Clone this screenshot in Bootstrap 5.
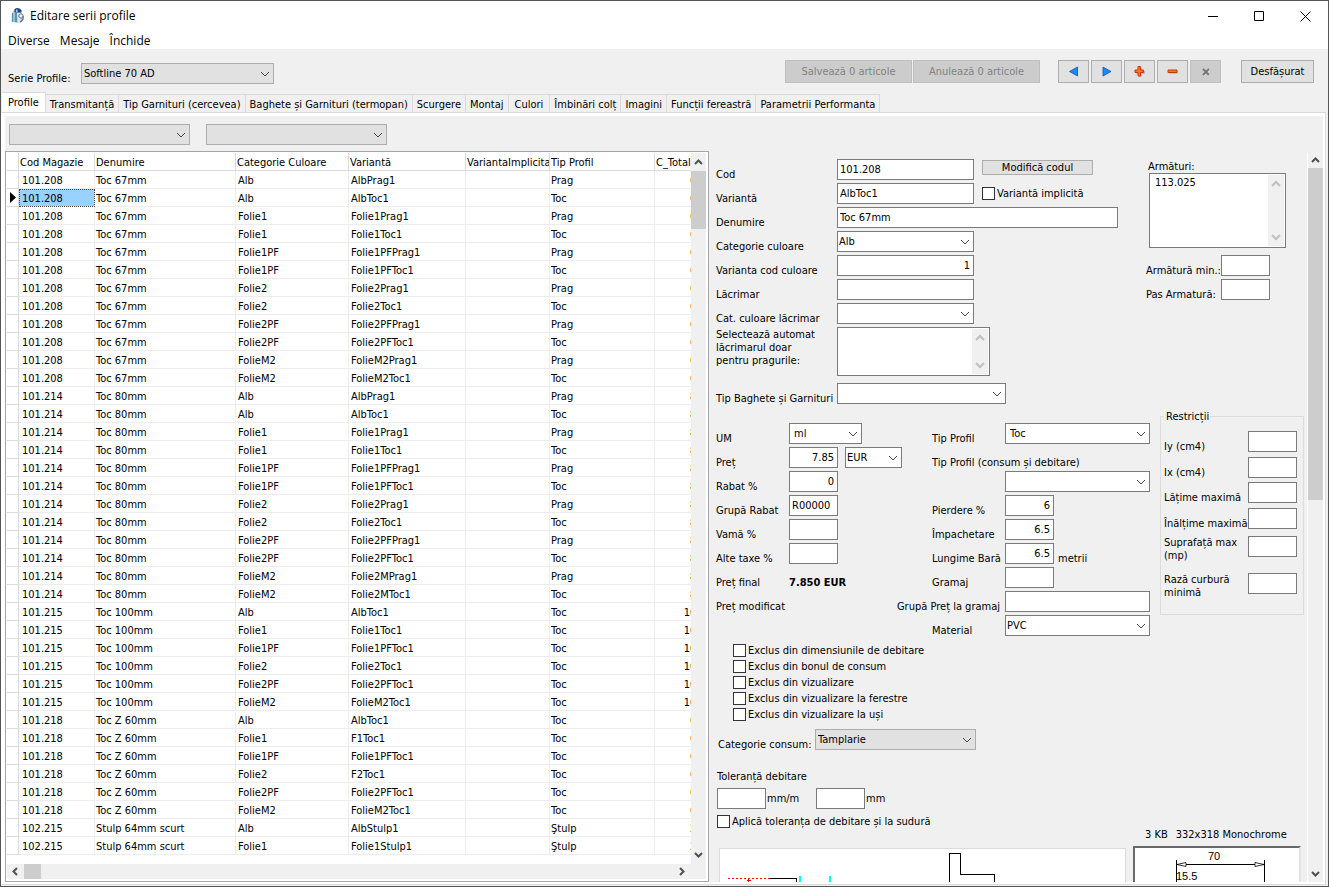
<!DOCTYPE html>
<html lang="ro">
<head>
<meta charset="utf-8">
<meta name="viewport" content="width=device-width, initial-scale=1">
<title>Editare serii profile</title>
<link href="https://cdn.jsdelivr.net/npm/bootstrap@5.3.0/dist/css/bootstrap.min.css" rel="stylesheet">
<style>
  :root { --face:#f0f0f0; --btn:#e1e1e1; --edge:#adadad; --field:#7a7a7a; --rule:#dadada; }
  body { font:11px/13px "DejaVu Sans Condensed","Noto Sans",sans-serif; color:#000; background:var(--face); }
  .app-window { border:1px solid #555; background:var(--face); }
  .title-bar, .menu-bar { font:12px/16px "Open Sans","Noto Sans",sans-serif; background:#fff; }
  .title-bar { height:29px; padding-left:9px; }
  .title-bar h1 { font-size:12px; line-height:16px; font-weight:400; margin:0 0 0 5px; }
  .title-bar button { width:46px; height:29px; border:0; background:none; padding:0; }
  .menu-bar { height:19px; padding:3px 0 0 7px; gap:10px; }
  .menu-bar a { color:#000; text-decoration:none; }
  .tool-bar { height:43px; padding:11px 14px 0 7px; }
  .tool-bar > label { width:73px; padding-top:12px; }
  .tool-bar .w-series { margin-top:3px; }
  .nav-keys { gap:2px; margin:0 20px 0 18px; }

  .form-control, .form-select { height:21px; min-height:0; padding:0 3px 1px 2px; border:1px solid var(--field); border-radius:0; background-color:#fff; color:#000; font-size:11px; line-height:18px; }
  .form-select { --bs-form-select-bg-img:none; background-image:url("data:image/svg+xml,%3Csvg xmlns='http://www.w3.org/2000/svg' width='10' height='6'%3E%3Cpath d='M1 1l4 4 4-4' fill='none' stroke='%23444'/%3E%3C/svg%3E"); background-size:10px 6px; background-position:right 3px top 7px; padding:0 14px 0 1px; line-height:19px; }
  .form-select.drop-list { background-color:var(--btn); border-color:var(--edge); padding-left:2px; }
  .form-select.pad-text { padding-left:4px; }
  .w-num { width:49px; } .w-mid { width:137px; } .w-um { width:73px; } .w-cur { width:57px; }
  .w-area { width:153px; } .w-filter { width:181px; } .w-series { width:193px; } .w-cat { width:161px; } .w-bag { width:169px; }

  .btn-flat { height:23px; padding:0; border:1px solid var(--edge); border-radius:0; background:var(--btn); color:#000; font-size:11px; line-height:21px; }
  .btn-flat svg { display:block; margin:0 auto; }
  .btn-flat:disabled { background:#ccc; border-color:#bfbfbf; color:#838383; opacity:1; }
  .btn-wide { width:127px; margin-left:1px; } .btn-ico { width:31px; } .btn-more { width:73px; }
  .btn-small { width:111px; height:15px; line-height:14px; margin:1px 0 0 8px; }

  .page-tabs { padding-left:1px; flex-wrap:nowrap; border:0; }
  .page-tabs .nav-link { height:18px; margin:2px 0 0; padding:1px 4px 0; line-height:17px; border:1px solid var(--rule); border-width:1px 1px 0 0; border-radius:0; background:var(--face); color:#000; white-space:nowrap; }
  .page-tabs .nav-link.roomy { padding-left:6px; padding-right:6px; }
  .page-tabs .nav-link.active { height:20px; margin:0; padding-left:6px; padding-right:6px; background:#fff; border-color:var(--rule); }
  .tab-page { margin:0 2px 1px 0; border:1px solid var(--rule); border-left-color:#fff; background:#fff; padding:3px 2px 2px 3px; min-height:0; }
  .tab-body { background:var(--face); padding-top:8px; min-height:0; }
  .filters { gap:16px; padding:0 0 6px 4px; }

  .grid-frame { border:1px solid #a5a5ad; background:#fff; padding:1px 2px 2px 1px; }
  .grid-frame, .grid-row { min-width:0; min-height:0; }
  .grid-clip { overflow:hidden; }
  .data-grid { table-layout:fixed; width:709px; margin:0; border-collapse:separate; border-spacing:0; color:#000; }
  .data-grid th, .data-grid td { height:18px; padding:2px 0 0 2px; border:0 solid #ededed; border-width:0 1px 1px 0; font-weight:400; line-height:15px; vertical-align:top; white-space:nowrap; overflow:hidden; }
  .data-grid th { border-color:var(--rule); padding-left:1px; }
  .data-grid .mark-col { border-color:var(--rule); padding:3px 0 0 3px; }
  .data-grid td:nth-child(2) { padding-left:3px; }
  .data-grid td:nth-child(3), .data-grid td:nth-child(7) { padding-left:1px; }
  .data-grid td:last-child { text-align:right; padding-right:3px; }
  .data-grid .picked { background:#99d1ff; outline:1px dotted #444; outline-offset:-1px; }
  .data-grid svg { display:block; }

  .scroll-v { width:15px; background:var(--face); }
  .scroll-h { height:15px; background:var(--face); }
  .scroll-v span, .scroll-h span { display:block; background:#cdcdcd; }
  .scroll-v svg, .scroll-h svg { display:block; flex:none; }

  .form-pane { width:614px; flex:none; margin-top:2px; min-height:0; }
  .form-scroll { overflow:hidden; padding:6px 0 0 7px; border-right:1px solid #fff; }
  .form-grid { display:grid; grid-auto-rows:24px; align-content:start; }
  .form-grid > label, .form-grid > span, .form-grid output, .low { align-self:end; line-height:16px; white-space:nowrap; }
  .form-grid > label { padding-bottom:1px; margin-bottom:-1px; }
  .g-main { grid-template-columns:121px 281px; grid-template-rows:repeat(7,24px) 56px 24px; }
  .form-grid > label.note { align-self:start; line-height:13px; padding-top:1px; }
  .g-price { grid-template-columns:73px 113px; padding-top:16px; margin-right:30px; }
  .g-type { grid-template-columns:73px 145px; padding-top:16px; margin-right:10px; }
  .form-grid > label.across { grid-column:span 2; }
  .form-grid > label.to-left { justify-self:end; padding-right:5px; }
  .arm-box { margin-left:30px; padding-top:1px; }
  .g-arm { grid-template-columns:75px 49px; margin:7px 0 0 -2px; }
  .list-area { height:49px; resize:none; overflow:hidden; padding-top:0; }
  .list-area.tall { height:75px; padding:0 20px 0 5px; }
  .area-bar { top:2px; right:2px; bottom:2px; width:16px; background:var(--face); }
  .tick { appearance:none; width:13px; height:13px; margin:0; border:1px solid #333; background:#fff; flex:none; }
  .tick:checked { background:#333; }
  .tick-line { display:flex; align-items:center; gap:2px; }
  .limits { border:1px solid #dcdcdc; width:144px; height:205px; margin-top:3px; padding:8px 4px 0 3px; }
  .limits legend { float:none; width:auto; font-size:11px; line-height:13px; margin:0; padding:0 1px 0 2px; }
  .g-limits { display:grid; grid-template-columns:84px 49px; grid-template-rows:26px 25px 26px 28px 37px 22px; }
  .g-limits label { padding-top:9px; white-space:nowrap; }
  .g-limits .two { padding-top:0; white-space:normal; }
  .flags { padding:3px 0 0 17px; }
  .flags label { height:16px; }
  .cons-line { height:24px; margin:7px 0 0 2px; }
  .cons-line label { width:97px; }
  .tol-head { margin:17px 0 5px 1px; }
  .tol-line { margin-left:1px; }
  .tol-line label { width:50px; padding-left:1px; }
  .weld { margin:6px 0 0 1px; }
  .sheet { width:407px; height:60px; border:1px solid var(--rule); background:#fff; margin:20px 7px 0 3px; }
  .thumb { width:168px; height:60px; border:2px solid #696969; border-right-color:#e3e3e3; background:#fff; margin-top:5px; }
</style>
</head>
<body>
<div class="app-window vh-100 d-flex flex-column overflow-hidden">
  <header class="title-bar d-flex align-items-center flex-shrink-0">
    <svg width="15" height="17" viewBox="0 0 15 17">
      <path d="M4 2.500Q7 0 11 3l1 12q-2 2-4 1L3 15 2 6z" fill="#b9c9d6"/>
      <path d="M4.500 2.500q3-3 7 .5V5.500h-7z" fill="#1d4a86"/><path d="M6 2.500h1.500V5H6z" fill="#9fd3ef"/>
      <path d="M2 6h5v9H2z" fill="#5793b8"/><path d="M4 6v9M1.500 7v8" stroke="#e4edf3"/>
      <path d="M7 6h4v10H8z" fill="#dfe7ee"/>
      <circle cx="11" cy="9" r="2.200" fill="#eef2f6" stroke="#68737f"/><path d="M13.200 9q.5 4-3.200 6" fill="none" stroke="#68737f" stroke-width="1.300"/>
    </svg>
    <h1 class="flex-grow-1">Editare serii profile</h1>
    <button type="button" aria-label="Minimizare"><svg width="11" height="11"><path d="M0 5.500h10" stroke="#000"/></svg></button>
    <button type="button" aria-label="Maximizare"><svg width="11" height="11"><path d="M.5.5h9v9h-9z" fill="none" stroke="#000"/></svg></button>
    <button type="button" aria-label="Închidere"><svg width="11" height="11"><path d="M.5.5l10 10M10.500.5l-10 10" stroke="#000"/></svg></button>
  </header>
  <nav class="menu-bar d-flex align-items-center flex-shrink-0">
    <a href="#">Diverse</a><a href="#">Mesaje</a><a href="#">Închide</a>
  </nav>

  <div class="tool-bar d-flex align-items-start flex-shrink-0">
    <label for="serie">Serie Profile:</label>
    <select id="serie" class="form-select drop-list w-series me-auto"><option>Softline 70 AD</option></select>
    <button type="button" class="btn btn-flat btn-wide" disabled>Salvează 0 articole</button>
    <button type="button" class="btn btn-flat btn-wide" disabled>Anulează 0 articole</button>
    <div class="nav-keys d-flex">
      <button type="button" class="btn btn-flat btn-ico" aria-label="Înapoi"><svg width="11" height="11"><path d="M9.500 1v9L1.500 5.500z" fill="#1b8af0" stroke="#0b57b4" stroke-width=".8"/></svg></button>
      <button type="button" class="btn btn-flat btn-ico" aria-label="Înainte"><svg width="11" height="11"><path d="M2 1v9l8-4.500z" fill="#1b8af0" stroke="#0b57b4" stroke-width=".8"/></svg></button>
      <button type="button" class="btn btn-flat btn-ico" aria-label="Adaugă"><svg width="12" height="12"><path d="M5 1h3v3h3v3H8v3H5V7H2V4h3z" fill="#bdbdbd" transform="translate(0 1)"/><path d="M4 .5h2.500v3.500h3v2.500h-3V10H4V6.500H1V4h3z" fill="#ff7a10" stroke="#c93a00"/></svg></button>
      <button type="button" class="btn btn-flat btn-ico" aria-label="Șterge"><svg width="12" height="12"><path d="M2 5h9v3H2z" fill="#c4c4c4"/><path d="M1 4h9v2.500H1z" fill="#ff7a10" stroke="#c93a00"/></svg></button>
      <button type="button" class="btn btn-flat btn-ico" aria-label="Anulează" disabled><svg width="12" height="12"><path d="M3.500 3.500l6 6M9.500 3.500l-6 6" stroke="#eee" stroke-width="2"/><path d="M3 3l6 6M9 3L3 9" stroke="#757575" stroke-width="2"/></svg></button>
    </div>
    <button type="button" class="btn btn-flat btn-more">Desfășurat</button>
  </div>

  <ul class="nav nav-tabs page-tabs flex-shrink-0">
    <li><a class="nav-link active" href="#">Profile</a></li>
    <li><a class="nav-link" href="#">Transmitanță</a></li>
    <li><a class="nav-link" href="#">Tip Garnituri (cercevea)</a></li>
    <li><a class="nav-link" href="#">Baghete și Garnituri (termopan)</a></li>
    <li><a class="nav-link" href="#">Scurgere</a></li>
    <li><a class="nav-link" href="#">Montaj</a></li>
    <li><a class="nav-link roomy" href="#">Culori</a></li>
    <li><a class="nav-link" href="#">Îmbinări colț</a></li>
    <li><a class="nav-link" href="#">Imagini</a></li>
    <li><a class="nav-link" href="#">Funcții fereastră</a></li>
    <li><a class="nav-link" href="#">Parametrii Performanta</a></li>
  </ul>

  <main class="tab-page flex-grow-1 d-flex flex-column">
    <div class="tab-body flex-grow-1 d-flex flex-column">
      <div class="filters d-flex flex-shrink-0">
        <select class="form-select drop-list w-filter" aria-label="Filtru cod"><option></option></select>
        <select class="form-select drop-list w-filter" aria-label="Filtru categorie"><option></option></select>
      </div>
      <div class="grid-row d-flex flex-grow-1">
        <section class="grid-frame d-flex flex-column flex-grow-1">
          <div class="grid-row d-flex flex-grow-1">
            <div class="grid-clip flex-grow-1">
              <table class="data-grid">
                <colgroup><col style="width:12px"><col style="width:76px"><col style="width:141px"><col style="width:113px"><col style="width:117px"><col style="width:84px"><col style="width:105px"><col style="width:61px"></colgroup>
                <thead><tr><th class="mark-col"></th><th>Cod Magazie</th><th>Denumire</th><th>Categorie Culoare</th><th>Variantă</th><th>VariantaImplicita</th><th>Tip Profil</th><th>C_Total</th></tr></thead>
                <tbody id="rows"></tbody>
              </table>
            </div>
            <div class="scroll-v d-flex flex-column flex-shrink-0">
              <svg width="15" height="18"><path d="M4 11l3.500-3.500L11 11" fill="none" stroke="#505050" stroke-width="2"/></svg>
              <span style="height:58px"></span>
              <svg class="mt-auto" width="15" height="18"><path d="M4 7l3.500 3.500L11 7" fill="none" stroke="#505050" stroke-width="2"/></svg>
            </div>
          </div>
          <div class="scroll-h d-flex flex-shrink-0">
            <svg width="17" height="15"><path d="M10 4L6.500 7.500 10 11" fill="none" stroke="#505050" stroke-width="2"/></svg>
            <span style="width:17px"></span>
            <svg class="ms-auto me-3" width="17" height="15"><path d="M7 4l3.500 3.500L7 11" fill="none" stroke="#505050" stroke-width="2"/></svg>
          </div>
        </section>

        <section class="form-pane d-flex">
          <form class="form-scroll flex-grow-1">
            <div class="d-flex">
              <div class="form-grid g-main">
                <label for="cod">Cod</label>
                <div class="d-flex"><input id="cod" class="form-control w-mid" value="101.208"><button type="button" class="btn btn-flat btn-small">Modifică codul</button></div>
                <label for="var">Variantă</label>
                <div class="d-flex align-items-start"><input id="var" class="form-control w-mid" value="AlbToc1"><label class="tick-line ps-2 pt-1"><input type="checkbox" class="tick">Variantă implicită</label></div>
                <label for="den">Denumire</label>
                <input id="den" class="form-control" value="Toc 67mm">
                <label for="cat">Categorie culoare</label>
                <select id="cat" class="form-select w-mid"><option>Alb</option></select>
                <label for="vcc">Varianta cod culoare</label>
                <input id="vcc" class="form-control w-mid text-end" value="1">
                <label for="lac">Lăcrimar</label>
                <input id="lac" class="form-control w-mid">
                <label for="ccl">Cat. culoare lăcrimar</label>
                <select id="ccl" class="form-select w-mid"><option></option></select>
                <label for="sel" class="note">Selectează automat<br>lăcrimarul doar<br>pentru pragurile:</label>
                <div class="align-self-start position-relative w-area"><textarea id="sel" class="form-control list-area d-block"></textarea>
                  <div class="area-bar position-absolute d-flex flex-column justify-content-between"><svg width="16" height="17"><path d="M4 11l4-4 4 4" fill="none" stroke="#bfbfbf" stroke-width="2"/></svg><svg width="16" height="17"><path d="M4 6l4 4 4-4" fill="none" stroke="#bfbfbf" stroke-width="2"/></svg></div></div>
                <label for="bag">Tip Baghete și Garnituri</label>
                <select id="bag" class="form-select w-bag"><option></option></select>
              </div>
              <div class="arm-box">
                <label for="arm" class="d-block">Armături:</label>
                <div class="position-relative w-mid" style="margin-left:1px"><textarea id="arm" class="form-control list-area tall d-block">113.025</textarea>
                  <div class="area-bar position-absolute d-flex flex-column justify-content-between"><svg width="16" height="17"><path d="M4 11l4-4 4 4" fill="none" stroke="#bfbfbf" stroke-width="2"/></svg><svg width="16" height="17"><path d="M4 6l4 4 4-4" fill="none" stroke="#bfbfbf" stroke-width="2"/></svg></div></div>
                <div class="form-grid g-arm">
                  <label for="amin">Armătură min.:</label><input id="amin" class="form-control w-num">
                  <label for="pas">Pas Armatură:</label><input id="pas" class="form-control w-num">
                </div>
              </div>
            </div>

            <div class="d-flex align-items-start">
              <div class="form-grid g-price">
                <label for="um">UM</label><select id="um" class="form-select pad-text w-um"><option>ml</option></select>
                <label for="pret">Preț</label>
                <div class="d-flex justify-content-between"><input id="pret" class="form-control w-num text-end" value="7.85"><select class="form-select w-cur" aria-label="Valută"><option>EUR</option></select></div>
                <label for="rab">Rabat %</label><input id="rab" class="form-control w-num text-end" value="0">
                <label for="grab">Grupă Rabat</label><input id="grab" class="form-control w-num pe-0" value="R00000">
                <label for="vama">Vamă %</label><input id="vama" class="form-control w-num">
                <label for="taxe">Alte taxe %</label><input id="taxe" class="form-control w-num">
                <span>Preț final</span><output class="fw-bold">7.850 EUR</output>
                <span>Preț modificat</span>
              </div>
              <div class="form-grid g-type">
                <label for="tip">Tip Profil</label><select id="tip" class="form-select pad-text"><option>Toc</option></select>
                <label for="tip2" class="across">Tip Profil (consum și debitare)</label>
                <span></span><select id="tip2" class="form-select"><option></option></select>
                <label for="pier">Pierdere %</label><input id="pier" class="form-control w-num text-end" value="6">
                <label for="imp">Împachetare</label><input id="imp" class="form-control w-num text-end" value="6.5">
                <label for="lung">Lungime Bară</label><div class="d-flex"><input id="lung" class="form-control w-num text-end" value="6.5"><span class="low ps-1">metrii</span></div>
                <label for="gram">Gramaj</label><input id="gram" class="form-control w-num">
                <label for="ggr" class="to-left">Grupă Preț la gramaj</label><input id="ggr" class="form-control">
                <label for="mat">Material</label><select id="mat" class="form-select"><option>PVC</option></select>
              </div>
              <fieldset class="limits">
                <legend>Restricții</legend>
                <div class="g-limits">
                  <label for="iy">Iy (cm4)</label><input id="iy" class="form-control w-num">
                  <label for="ix">Ix (cm4)</label><input id="ix" class="form-control w-num">
                  <label for="lmax">Lățime maximă</label><input id="lmax" class="form-control w-num">
                  <label for="imax">Înălțime maximă</label><input id="imax" class="form-control w-num">
                  <label for="smax" class="two">Suprafață max (mp)</label><input id="smax" class="form-control w-num">
                  <label for="raza" class="two">Rază curbură minimă</label><input id="raza" class="form-control w-num">
                </div>
              </fieldset>
            </div>

            <div class="flags">
              <label class="tick-line"><input type="checkbox" class="tick">Exclus din dimensiunile de debitare</label>
              <label class="tick-line"><input type="checkbox" class="tick">Exclus din bonul de consum</label>
              <label class="tick-line"><input type="checkbox" class="tick">Exclus din vizualizare</label>
              <label class="tick-line"><input type="checkbox" class="tick">Exclus din vizualizare la ferestre</label>
              <label class="tick-line"><input type="checkbox" class="tick">Exclus din vizualizare la uși</label>
            </div>
            <div class="cons-line d-flex">
              <label for="cons" class="low">Categorie consum:</label>
              <select id="cons" class="form-select drop-list w-cat"><option>Tamplarie</option></select>
            </div>
            <div class="tol-head">Toleranță debitare</div>
            <div class="tol-line d-flex align-items-center">
              <input id="t1" class="form-control w-num"><label for="t1">mm/m</label>
              <input id="t2" class="form-control w-num"><label for="t2">mm</label>
            </div>
            <label class="tick-line weld"><input type="checkbox" class="tick">Aplică toleranța de debitare și la sudură</label>
            <div class="d-flex">
              <div class="sheet">
                <svg width="405" height="58" viewBox="720 849 405 58" fill="none" shape-rendering="crispEdges">
                  <path d="M728 878.500h41" stroke="red" stroke-dasharray="2 2"/><path d="M748.500 879v28M746.500 880.500h4" stroke="red"/>
                  <path d="M769 878.500h27.500V907" stroke="#000"/><path d="M800 876v31M830 876v31" stroke="#0ff" stroke-width="2"/>
                  <path d="M949.500 907v-53.500h11v21h34V907" stroke="#000"/>
                </svg>
              </div>
              <div>
                <div class="d-flex gap-2 ps-2 ms-1"><span>3 KB</span><span>332x318 Monochrome</span></div>
                <div class="thumb">
                  <svg width="164" height="56" viewBox="1135 848 164 56" font-family="Liberation Sans,Arial,sans-serif" font-size="11">
                    <path d="M1176.500 860v44M1264.500 860v44M1177 864.500h88" stroke="#000" fill="none"/>
                    <path d="M1177 864.500l9-2v4zM1264 864.500l-9-2v4z" fill="#fff" stroke="#000" stroke-width=".8"/>
                    <text x="1208" y="860">70</text><text x="1176" y="880">15.5</text>
                  </svg>
                </div>
              </div>
            </div>
          </form>
          <div class="scroll-v d-flex flex-column flex-shrink-0">
            <svg width="15" height="15"><path d="M4 9l3.500-3.500L11 9" fill="none" stroke="#505050" stroke-width="2"/></svg>
            <span style="height:332px"></span>
            <svg class="mt-auto" width="15" height="17"><path d="M4 7l3.500 3.500L11 7" fill="none" stroke="#505050" stroke-width="2"/></svg>
          </div>
        </section>
      </div>
    </div>
  </main>
</div>
<script>
  const colours = ['Alb', 'Folie1', 'Folie1PF', 'Folie2', 'Folie2PF', 'FolieM2'];
  const both = names => names.flatMap((n, i) => ['Prag', 'Toc'].map(t => [colours[i], n + t + '1', t]));
  const tocs = names => names.map((n, i) => [colours[i], n + 'Toc1', 'Toc']);
  const groups = [
    ['101.208', 'Toc 67mm', '6.75', both(colours)],
    ['101.214', 'Toc 80mm', '8.15', both(['Alb', 'Folie1', 'Folie1PF', 'Folie2', 'Folie2PF', 'Folie2M'])],
    ['101.215', 'Toc 100mm', '10.20', tocs(colours)],
    ['101.218', 'Toc Z 60mm', '6.40', tocs(['Alb', 'F1', 'Folie1PF', 'F2', 'Folie2PF', 'FolieM2'])],
    ['102.215', 'Stulp 64mm scurt', '2.90', [['Alb', 'AlbStulp1', 'Ştulp'], ['Folie1', 'Folie1Stulp1', 'Ştulp']]]
  ];
  let n = 0;
  document.getElementById('rows').innerHTML = groups.flatMap(([cod, den, total, list]) => list.map(([c, v, t]) => {
    const on = n++ === 1;
    const mark = on ? '<svg width="6" height="11"><path d="M0 0l6 5.500L0 11z"/></svg>' : '';
    return `<tr><td class="mark-col">${mark}</td><td class="${on ? 'picked' : ''}">${cod}</td><td>${den}</td><td>${c}</td><td>${v}</td><td></td><td>${t}</td><td>${total}</td></tr>`;
  })).join('');
</script>
<script src="https://cdn.jsdelivr.net/npm/bootstrap@5.3.0/dist/js/bootstrap.bundle.min.js"></script>
</body>
</html>
